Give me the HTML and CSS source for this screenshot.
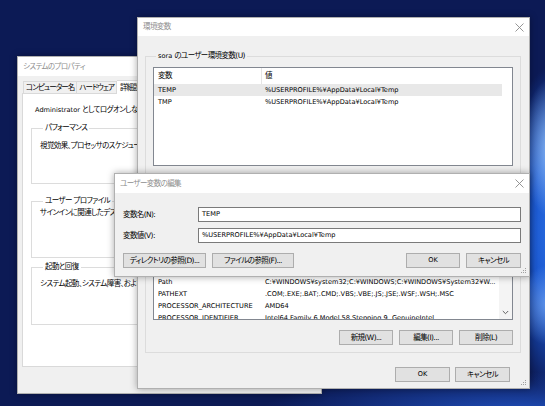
FILE: index.html
```html
<!DOCTYPE html>
<html lang="ja">
<head>
<meta charset="utf-8">
<title>環境変数</title>
<link rel="stylesheet" href="styles.css">
</head>
<body>
<div class="desktop">

  <div class="win sys">
    <div class="titlebar"><span class="title ja">システムのプロパティ</span></div>
    <div class="sys-body">
      <div class="tabs ja">
        <div class="tab">コンピューター名</div>
        <div class="tab">ハードウェア</div>
        <div class="tab active">詳細設定</div>
        <div class="tab">システムの保護</div>
        <div class="tab">リモート</div>
      </div>
      <div class="tab-panel">
        <p class="note">Administrator <span class="ja">としてログオンしない場合は、これらのほとんどは変更できません。</span></p>
        <fieldset class="group g-perf">
          <legend class="ja">パフォーマンス</legend>
          <p class="gtext ja">視覚効果、プロセッサのスケジュール、メモリ使用、および仮想メモリ</p>
        </fieldset>
        <fieldset class="group g-prof">
          <legend class="ja">ユーザー プロファイル</legend>
          <p class="gtext ja">サインインに関連したデスクトップ設定</p>
        </fieldset>
        <fieldset class="group g-start">
          <legend class="ja">起動と回復</legend>
          <p class="gtext ja">システム起動、システム障害、およびデバッグ情報</p>
        </fieldset>
      </div>
    </div>
  </div>

  <div class="win env">
    <div class="titlebar">
      <span class="title ja">環境変数</span>
      <svg class="close" width="9" height="9" viewBox="0 0 9 9"><path d="M0.5 0.5L8.5 8.5M8.5 0.5L0.5 8.5" stroke="#8a8a8a" stroke-width="0.9" fill="none"/></svg>
    </div>
    <div class="env-body">
      <fieldset class="egroup eg-user">
        <legend>sora <span class="ja">のユーザー環境変数(U)</span></legend>
        <div class="list list-user">
          <div class="lv">
            <div class="hdr ja"><div class="c1">変数</div><div class="c2">値</div></div>
            <div class="row sel"><div class="c1">TEMP</div><div class="c2">%USERPROFILE%¥AppData¥Local¥Temp</div></div>
            <div class="row"><div class="c1">TMP</div><div class="c2">%USERPROFILE%¥AppData¥Local¥Temp</div></div>
          </div>
        </div>
        <div class="btnrow ja">
          <div class="btn w54">新規(N)...</div>
          <div class="btn w54">編集(E)...</div>
          <div class="btn w54">削除(D)</div>
        </div>
      </fieldset>
      <fieldset class="egroup eg-sys">
        <legend class="ja">システム環境変数(S)</legend>
        <div class="list list-sys">
          <div class="lv">
            <div class="hdr ja"><div class="c1">変数</div><div class="c2">値</div></div>
            <div class="row"><div class="c1">DriverData</div><div class="c2">C:¥Windows¥System32¥Drivers¥DriverData</div></div>
            <div class="row"><div class="c1">NUMBER_OF_PROCESSORS</div><div class="c2">4</div></div>
            <div class="row"><div class="c1">OS</div><div class="c2">Windows_NT</div></div>
            <div class="row"><div class="c1">Path</div><div class="c2">C:¥WINDOWS¥system32;C:¥WINDOWS;C:¥WINDOWS¥System32¥W...</div></div>
            <div class="row"><div class="c1">PATHEXT</div><div class="c2">.COM;.EXE;.BAT;.CMD;.VBS;.VBE;.JS;.JSE;.WSF;.WSH;.MSC</div></div>
            <div class="row"><div class="c1">PROCESSOR_ARCHITECTURE</div><div class="c2">AMD64</div></div>
            <div class="row"><div class="c1">PROCESSOR_IDENTIFIER</div><div class="c2">Intel64 Family 6 Model 58 Stepping 9, GenuineIntel</div></div>
          </div>
          <div class="vscroll">
            <svg width="7" height="5" viewBox="0 0 7 5"><path d="M0.8 1L3.5 3.7L6.2 1" stroke="#606060" stroke-width="1" fill="none"/></svg>
          </div>
        </div>
        <div class="btnrow ja">
          <div class="btn w54">新規(W)...</div>
          <div class="btn w54">編集(I)...</div>
          <div class="btn w54">削除(L)</div>
        </div>
      </fieldset>
      <div class="footer">
        <div class="btn w55">OK</div>
        <div class="btn w55 ja">キャンセル</div>
      </div>
    </div>
    <svg class="grip" width="6" height="6" viewBox="0 0 6 6"><g fill="#a0a0a0"><rect x="4" y="0" width="1" height="1"/><rect x="2" y="2" width="1" height="1"/><rect x="4" y="2" width="1" height="1"/><rect x="0" y="4" width="1" height="1"/><rect x="2" y="4" width="1" height="1"/><rect x="4" y="4" width="1" height="1"/></g></svg>
  </div>

  <div class="win edit">
    <div class="titlebar">
      <span class="title ja">ユーザー変数の編集</span>
      <svg class="close" width="9" height="9" viewBox="0 0 9 9"><path d="M0.5 0.5L8.5 8.5M8.5 0.5L0.5 8.5" stroke="#8a8a8a" stroke-width="0.9" fill="none"/></svg>
    </div>
    <div class="edit-body">
      <div class="field"><span class="flabel ja">変数名(N):</span><div class="input">TEMP</div></div>
      <div class="field"><span class="flabel ja">変数値(V):</span><div class="input">%USERPROFILE%¥AppData¥Local¥Temp</div></div>
      <div class="edit-buttons">
        <div class="btn w83 ja">ディレクトリの参照(D)...</div>
        <div class="btn w82 ja">ファイルの参照(F)...</div>
        <div class="btn w54 push">OK</div>
        <div class="btn w55 ja">キャンセル</div>
      </div>
    </div>
    <svg class="grip" width="6" height="6" viewBox="0 0 6 6"><g fill="#a0a0a0"><rect x="4" y="0" width="1" height="1"/><rect x="2" y="2" width="1" height="1"/><rect x="4" y="2" width="1" height="1"/><rect x="0" y="4" width="1" height="1"/><rect x="2" y="4" width="1" height="1"/><rect x="4" y="4" width="1" height="1"/></g></svg>
  </div>

</div>
</body>
</html>
```

FILE: styles.css
```css
* { box-sizing: border-box; }

body {
  margin: 0;
  font-family: "DejaVu Sans", "Noto Sans CJK JP", sans-serif;
  font-size: 6.6px;
  line-height: 12px;
  color: #000;
  font-feature-settings: "palt" 1;
}

.ja {
  font-size: 7.5px;
  letter-spacing: -0.6px;
}

p { margin: 0; }

.desktop {
  position: relative;
  width: 545px;
  height: 406px;
  overflow: hidden;
  background:
    radial-gradient(ellipse 30px 70px at 552px 148px, rgba(160, 205, 255, 0.85), rgba(160, 205, 255, 0) 100%),
    radial-gradient(ellipse 30px 40px at 548px 305px, rgba(140, 190, 255, 0.6), rgba(140, 190, 255, 0) 100%),
    radial-gradient(ellipse 70px 170px at 565px 230px, #2f78ea 0%, #1b57cf 50%, rgba(20, 55, 170, 0) 100%),
    radial-gradient(ellipse 260px 40px at 520px 412px, rgba(35, 90, 210, 0.8), rgba(35, 90, 210, 0) 100%),
    #0c1a55;
}

/* windows on the desktop */
.win {
  position: absolute;
  display: flex;
  flex-direction: column;
  background: #f0f0f0;
  border: 1px solid #b0b0b0;
  box-shadow: 0 0 7px rgba(0, 0, 0, 0.35);
}

.sys  { left: 17px;  top: 56px;  width: 305px; height: 338px; z-index: 1; }
.env  { left: 137px; top: 17px;  width: 393px; height: 372px; z-index: 2; }
.edit { left: 114px; top: 173px; width: 416px; height: 104px; z-index: 3; }

.titlebar {
  flex: none;
  display: flex;
  align-items: center;
  justify-content: space-between;
  background: #fff;
  padding-left: 5px;
  color: #8e8e8e;
}
.sys .titlebar  { height: 19px; }
.env .titlebar  { height: 18px; }
.edit .titlebar { height: 19px; }

.close { margin-right: 5px; }

.grip { position: absolute; right: 2px; bottom: 2px; }

/* System properties */
.sys-body {
  padding: 4px 4px 0 4px;
  display: flex;
  flex-direction: column;
}

.tabs {
  display: flex;
  align-items: flex-end;
  height: 13px;
  margin-left: 1px;
  white-space: nowrap;
  letter-spacing: -0.95px;
}

.tab {
  height: 12px;
  line-height: 11px;
  padding: 0 2px;
  border: 1px solid #d9d9d9;
  border-bottom: none;
  border-right: none;
  background: #f0f0f0;
}
.tab:nth-child(2) { border-right: 1px solid #d9d9d9; }
.tab.active {
  position: relative;
  z-index: 1;
  height: 14px;
  line-height: 13px;
  margin-bottom: -1px;
  padding: 0 3px;
  background: #fff;
  border-left: none;
}

.tab-panel {
  height: 274px;
  background: #fff;
  border: 1px solid #d9d9d9;
  padding: 0 8px 0 8px;
  overflow: hidden;
  white-space: nowrap;
}

.note { margin: 10px 0 0 4px; }

.group, .egroup {
  margin: 0;
  min-width: 0;
  border: 1px solid #dcdcdc;
}
.group legend, .egroup legend {
  padding: 0 2px;
  margin-left: 3px;
  line-height: 12px;
}

.group { padding: 0 8px; }
.g-perf  { margin-top: 6px;  padding-bottom: 31px; }
.g-perf .gtext { margin-top: 6px; }
.g-prof  { margin-top: 11px; padding-bottom: 38px; }
.g-start { margin-top: 3px;  padding-bottom: 34px; }
.g-start .gtext { margin-top: 5px; }

/* Environment variables */
.env-body {
  padding: 0 8px 0 7px;
  display: flex;
  flex-direction: column;
}

.egroup { padding: 0 7px; }
.eg-user { margin-top: 14px; padding-bottom: 8px; }
.eg-user .btnrow { margin-top: 9px; }
.eg-sys  { margin-top: 6px;  padding-bottom: 7px; }

.list {
  display: flex;
  background: #fff;
  border: 1px solid #828790;
  overflow: hidden;
  white-space: nowrap;
}
.list-user { margin-top: 5px; height: 99px; }
.list-sys  { margin-top: 6px; height: 97px; }

.lv { flex: 1; min-width: 0; overflow: hidden; }

.hdr {
  display: flex;
  height: 16px;
  line-height: 16px;
  width: 348px;
}
.hdr .c1 { border-right: 1px solid #e5e5e5; }
.hdr .c2 { padding-left: 3px; }

.row {
  display: flex;
  height: 12px;
  line-height: 12px;
  width: 348px;
}
.row.sel { background: #e8e8e8; }

.c1 { flex: none; width: 108px; padding-left: 4px; overflow: hidden; }
.c2 { flex: 1; padding-left: 3px; overflow: hidden; }

.vscroll {
  flex: none;
  width: 13px;
  background: #f4f4f4;
  display: flex;
  align-items: flex-end;
  justify-content: center;
  padding-bottom: 4px;
}

.btnrow {
  display: flex;
  justify-content: flex-end;
  gap: 6px;
  margin-top: 10px;
}

.footer {
  display: flex;
  justify-content: flex-end;
  gap: 5px;
  margin-top: 14px;
  padding-right: 11px;
}

.btn {
  flex: none;
  height: 15px;
  line-height: 13px;
  text-align: center;
  white-space: nowrap;
  background: #e1e1e1;
  border: 1px solid #adadad;
}
.w54 { width: 54px; }
.w55 { width: 55px; }
.w82 { width: 82px; }
.w83 { width: 83px; }

/* Edit user variable */
.edit-body {
  padding: 14px 8px 0 8px;
  display: flex;
  flex-direction: column;
}

.field {
  display: flex;
  align-items: center;
  height: 15px;
}
.field + .field { margin-top: 6px; }

.flabel { flex: none; width: 75px; }

.input {
  flex: 1;
  height: 15px;
  line-height: 13px;
  padding-left: 3px;
  background: #fff;
  border: 1px solid #7a7a7a;
  white-space: nowrap;
  overflow: hidden;
}

.edit-buttons {
  display: flex;
  gap: 6px;
  margin-top: 10px;
}
.push { margin-left: auto; }
```
